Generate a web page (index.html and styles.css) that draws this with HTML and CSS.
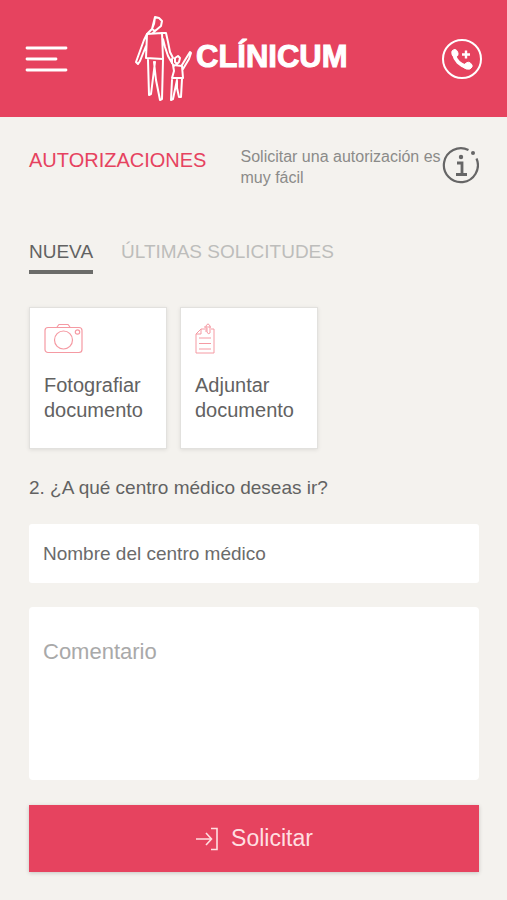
FILE: index.html
```html
<!DOCTYPE html>
<html lang="es">
<head>
<meta charset="utf-8">
<meta name="viewport" content="width=device-width, initial-scale=1">
<title>Clínicum - Autorizaciones</title>
<link rel="stylesheet" href="styles.css">
</head>
<body>
<header class="topbar">
  <button class="icon-button" type="button" aria-label="Menú">
    <svg width="44" height="28" viewBox="0 0 44 28" fill="none" stroke="currentColor" stroke-width="2.8" stroke-linecap="round"><path d="M2 3H41M2 14H31M2 25H41"/></svg>
  </button>
  <a class="brand" href="#">
    <svg class="brand-figures" width="60" height="90" viewBox="0 0 60 90" fill="none" stroke="currentColor" stroke-width="2" stroke-linejoin="round" stroke-linecap="round">
      <path d="M21 3L25 4L28 7L27 12L21 17L18 15ZM21 3L20 10L18 15L13 20M22 16L19 19"/>
      <path d="M13 20L28 19L29 45L12 44ZM13 20L10 26L2 48L4 50L6 47L12 32M28 19L32 19L34 28L36 38L39 44M29 25L31 33L34 42L38 49"/>
      <path d="M14 46L15 81L17 80L21 48M20 48L22 66L26 86L28 85L29 46"/>
      <path d="M41 44L44 42L46 44L45 48L43 50L41 48ZM38 45L38 49L40 52M39 51L48 52L49 64L38 64L40 57ZM48 51L51 46L56 38L57 39L55 45L52 50L49 55"/>
      <path d="M38 66L37 86L39 85L43 66M43 67L43 74L45 83L47 83L48 65"/>
    </svg>
    <span class="brand-name">CLÍNICUM</span>
  </a>
  <button class="icon-button" type="button" aria-label="Llamar">
    <svg width="42" height="42" viewBox="0 0 42 42" fill="none" stroke="currentColor">
      <circle cx="21" cy="21" r="19" stroke-width="2"/>
      <path d="M13 16C14 22 19 27 26 29" stroke-width="4"/>
      <path d="M11 13Q15 9 17 15Q18 18 14 19Q10 18 11 13ZM24 26Q28 22 31 27Q32 29 29 31Q25 32 22 29Z" fill="currentColor" stroke-width="1"/>
      <path d="M25 12.500V20.500M21 16.500H29" stroke-width="2.400"/>
    </svg>
  </button>
</header>
<main class="page">
  <div class="intro">
    <h1>AUTORIZACIONES</h1>
    <p>Solicitar una autorización es muy fácil</p>
    <button class="icon-button info" type="button" aria-label="Información">
      <svg width="38" height="38" viewBox="0 0 38 38" fill="none" stroke="currentColor" stroke-width="2.200">
        <path d="M27.500 4A17 17 0 1 0 35.500 12.500"/>
        <circle cx="32" cy="7" r="2" fill="currentColor" stroke="none"/>
        <circle cx="20" cy="11" r="2.200" fill="currentColor" stroke="none"/>
        <path d="M16 17H21V28M15 28.500H26" stroke-width="2.800"/>
      </svg>
    </button>
  </div>
  <nav class="tabs">
    <a class="tab active" href="#" aria-current="page">NUEVA</a>
    <a class="tab" href="#">ÚLTIMAS SOLICITUDES</a>
  </nav>
  <div class="cards">
    <button class="card" type="button">
      <svg width="40" height="32" viewBox="0 0 40 32" fill="none" stroke="currentColor" stroke-width="1.200">
        <rect x="1" y="4.500" width="37" height="25" rx="3"/>
        <path d="M13 4L15 1.500H24L26 4"/><circle cx="19.500" cy="17" r="9"/><circle cx="33.500" cy="9" r="2.200"/>
      </svg>
      <span>Fotografiar documento</span>
    </button>
    <button class="card" type="button">
      <svg width="20" height="32" viewBox="0 0 20 32" fill="none" stroke="currentColor" stroke-width="1">
        <path d="M10 6H6L1 11V30H19V6H16M6 6V11H1"/>
        <path d="M11 9V3Q13 -1 15 3V10Q13 12 12 9V5M9 4H16M4 15H16M4 20.500H16M4 26H16"/>
      </svg>
      <span>Adjuntar documento</span>
    </button>
  </div>
  <form class="request">
    <label for="centro">2. ¿A qué centro médico deseas ir?</label>
    <input id="centro" type="text" placeholder="Nombre del centro médico">
    <textarea id="comentario" aria-label="Comentario" placeholder="Comentario"></textarea>
    <button class="submit" type="button">
      <svg width="24" height="24" viewBox="0 0 24 24" fill="none" stroke="currentColor" stroke-width="1.600"><path d="M1 12H16M11 6L16.500 12L11 18M16 1.500H22V22.500H16"/></svg>
      <span>Solicitar</span>
    </button>
  </form>
</main>
</body>
</html>
```
FILE: styles.css
```css
* { box-sizing: border-box; }

body {
  margin: 0;
  background: #f4f2ee;
  color: #626262;
  font-family: "Liberation Sans", Arial, sans-serif;
  font-size: 19px;
  line-height: 25px;
}

button, input, textarea { font: inherit; color: inherit; border: 0; margin: 0; }
button { cursor: pointer; }
svg { display: block; flex: none; }
a { color: inherit; text-decoration: none; }

.icon-button { padding: 0; background: none; }

.topbar {
  display: flex;
  align-items: center;
  padding: 14px 24px 13px 25px;
  background: #e6435f;
  color: #fff;
}

.brand { display: flex; align-items: center; gap: 2px; margin: 0 auto 0 65px; }
.brand-name {
  padding-bottom: 4px;
  font-size: 31px;
  font-weight: bold;
  line-height: 32px;
  -webkit-text-stroke: 1px currentColor;
}

.page { padding: 29px 28px 28px 29px; }

.intro { display: flex; align-items: flex-start; }
.intro h1 {
  flex: 0 0 47%;
  margin: 0;
  padding-top: 2px;
  color: #e6435f;
  font-size: 20px;
  font-weight: normal;
  line-height: 25px;
}
.intro p { flex: 1; margin: 0; color: #8b8b89; font-size: 16px; line-height: 21px; }
.info { color: #666; }

.tabs { display: flex; gap: 28px; margin-top: 51px; color: #bdbdbb; }
.tab { padding-bottom: 6px; border-bottom: 4px solid transparent; }
.tab.active { color: #626262; border-color: #6b6c69; }

.cards { display: flex; gap: 13px; margin-top: 33px; }
.card {
  display: flex;
  flex-direction: column;
  align-items: flex-start;
  gap: 18px;
  flex: 0 0 138px;
  padding: 15px 14px 25px;
  background: #fff;
  border: 1px solid #e2e1de;
  box-shadow: 0 1px 4px #00000018;
  font-size: 20px;
  text-align: left;
}
.card svg { color: #f59aa3; }

.request { display: flex; flex-direction: column; margin-top: 26px; }
.request input {
  height: 59px;
  margin: 24px 0;
  padding: 0 14px;
  background: #fff;
  border-radius: 3px;
}
.request textarea {
  height: 173px;
  padding: 32px 14px;
  background: #fff;
  border-radius: 4px;
  font-size: 22px;
  resize: none;
}
input::placeholder { color: #6b6b6b; opacity: 1; }
textarea::placeholder { color: #a9a9a9; opacity: 1; }

.submit {
  display: flex;
  align-items: center;
  justify-content: center;
  gap: 12px;
  height: 67px;
  margin-top: 25px;
  background: #e6435f;
  box-shadow: 0 1px 4px #00000030;
  color: #ffdfe1;
  font-size: 23px;
}
```
